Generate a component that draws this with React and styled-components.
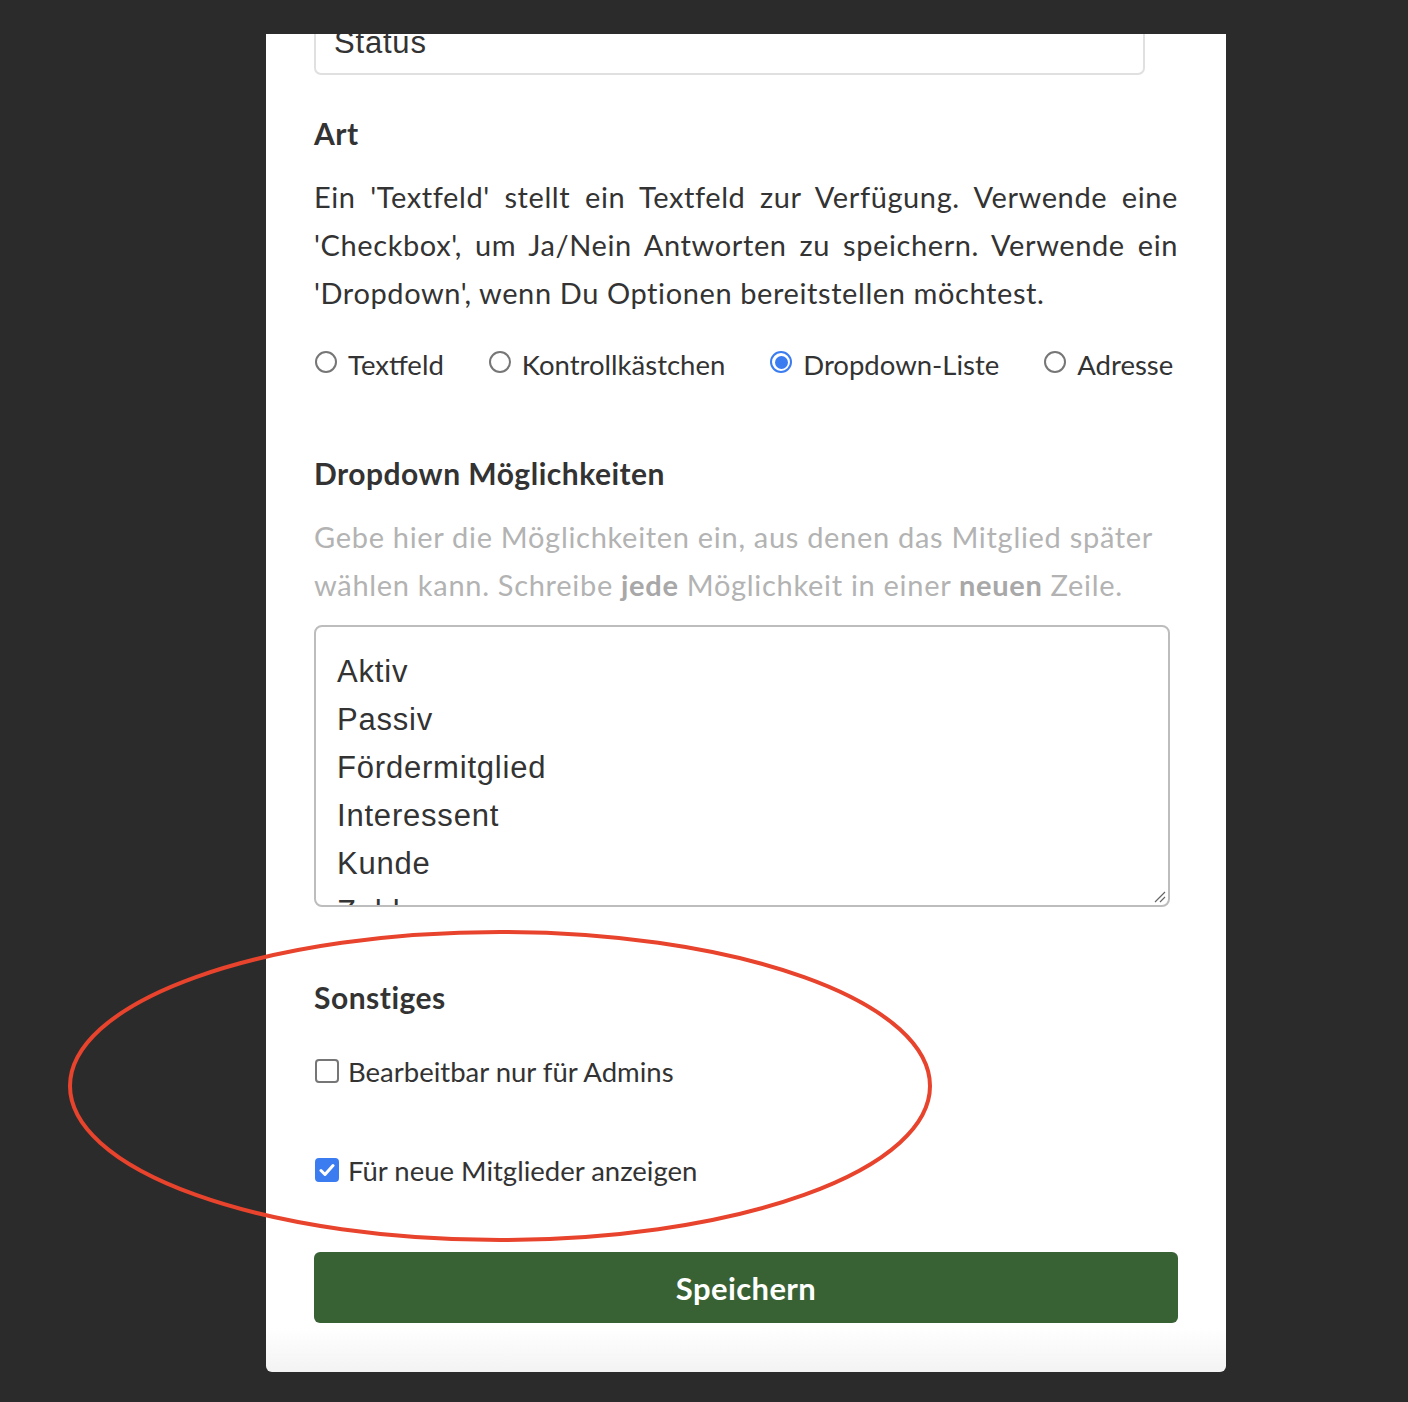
import React from 'react';
import styled, { createGlobalStyle } from 'styled-components';

const GlobalStyle = createGlobalStyle`
  html, body {
    margin: 0;
    padding: 0;
    background: #2b2b2b;
  }
  body {
    font-family: Lato, "Noto Sans", sans-serif;
    color: #333;
  }
`

//components
const Page = styled.div`
  position: relative;
  height: 1402px;
  padding: 34px 0 0 266px;
  box-sizing: border-box;
  overflow: hidden;
`
const Card = styled.div`
  width: 960px;
  height: 1338px;
  box-sizing: border-box;
  padding: 0 48px 49px;
  border-radius: 0 0 6px 6px;
  overflow: hidden;
  background: linear-gradient(to bottom, #fff calc(100% - 44px), #f3f3f3 100%);
  display: flex;
  flex-direction: column;
`
const TextInput = styled.div`
  margin-top: -23px;
  width: 831px;
  height: 64px;
  box-sizing: border-box;
  border: 2px solid #e0e0e0;
  border-radius: 7px;
  padding: 0 18px;
  display: flex;
  align-items: center;
  font-family: "Liberation Sans", Arial, sans-serif;
  font-size: 31px;
  letter-spacing: 0.8px;
  color: #333;
`
const Heading = styled.h3`
  margin: ${props => props.top}px 0 0;
  font-size: 30px;
  letter-spacing: 0.5px;
  line-height: 36px;
  font-weight: 700;
  color: #333;
`
const Paragraph = styled.p`
  margin: 22px 0 0;
  font-size: 29px;
  letter-spacing: 0.6px;
  line-height: 48px;
  text-align: justify;
  color: #333;
`
const Hint = styled.p`
  margin: 22px 0 0;
  font-size: 29px;
  letter-spacing: 0.7px;
  line-height: 48px;
  color: #b3b3b3;
  b {
    color: #a8a8a8;
    font-weight: 700;
  }
`
const RadioRow = styled.div`
  margin-top: 23px;
  display: flex;
  gap: 44px;
  height: 48px;
  align-items: center;
`
const Option = styled.label`
  display: flex;
  align-items: center;
  gap: ${props => props.gap || 11}px;
  font-size: 27.5px;
  color: #333;
  white-space: nowrap;
`
const RadioDot = styled.span`
  width: 22px;
  height: 22px;
  box-sizing: border-box;
  border-radius: 50%;
  border: 2px solid ${props => props.checked ? '#3b7cf0' : '#767676'};
  background: #fff;
  display: flex;
  align-items: center;
  justify-content: center;
  flex: none;
  margin: -4px 0 0 1px;
  &::after {
    content: '';
    display: ${props => props.checked ? 'block' : 'none'};
    width: 13px;
    height: 13px;
    border-radius: 50%;
    background: #3b7cf0;
  }
`
const TextArea = styled.div`
  margin-top: 16px;
  width: 856px;
  height: 282px;
  box-sizing: border-box;
  border: 2px solid #bdbdbd;
  border-radius: 8px;
  padding: 21px 21px 0;
  overflow: hidden;
  position: relative;
  font-family: "Liberation Sans", Arial, sans-serif;
  font-size: 31px;
  letter-spacing: 0.8px;
  line-height: 48px;
  color: #333;
`
const Grip = styled.svg`
  position: absolute;
  right: 2px;
  bottom: 2px;
`
const CheckRow = styled.div`
  margin-top: ${props => props.top}px;
  height: 48px;
  display: flex;
  align-items: center;
`
const Box = styled.span`
  width: 24px;
  height: 24px;
  box-sizing: border-box;
  border-radius: 4px;
  border: 2px solid ${props => props.checked ? '#3b7cf0' : '#767676'};
  background: ${props => props.checked ? '#3b7cf0' : '#fff'};
  display: flex;
  align-items: center;
  justify-content: center;
  flex: none;
  margin-left: 1px;
`
const SaveButton = styled.button`
  margin-top: 58px;
  width: 864px;
  height: 71px;
  border: none;
  border-radius: 6px;
  background: #386134;
  color: #fff;
  font-family: Lato, "Noto Sans", sans-serif;
  font-size: 31px;
  letter-spacing: 0.4px;
  font-weight: 700;
`
const Marker = styled.svg`
  position: absolute;
  left: 0;
  top: 0;
  pointer-events: none;
`

const Radio = ({ label, checked }) => (
  <Option>
    <RadioDot checked={checked} />
    {label}
  </Option>
)

const Check = ({ label, checked, top }) => (
  <CheckRow top={top}>
    <Option gap={9}>
      <Box checked={checked}>
        {checked && (
          <svg width="16" height="14" viewBox="0 0 16 14">
            <path d="M2 7.5 L6 11.5 L14 2.5" fill="none" stroke="#fff" strokeWidth="3" strokeLinecap="round" strokeLinejoin="round" />
          </svg>
        )}
      </Box>
      {label}
    </Option>
  </CheckRow>
)

const options = ['Aktiv', 'Passiv', 'Fördermitglied', 'Interessent', 'Kunde', 'Zahler'];

export default function App() {
  return (
    <>
      <GlobalStyle />
      <Page>
        <Card>
          <TextInput>Status</TextInput>
          <Heading top={40}>Art</Heading>
          <Paragraph>
            Ein 'Textfeld' stellt ein Textfeld zur Verfügung. Verwende eine 'Checkbox', um Ja/Nein Antworten zu speichern. Verwende ein 'Dropdown', wenn Du Optionen bereitstellen möchtest.
          </Paragraph>
          <RadioRow>
            <Radio label="Textfeld" />
            <Radio label="Kontrollkästchen" />
            <Radio label="Dropdown-Liste" checked />
            <Radio label="Adresse" />
          </RadioRow>
          <Heading top={67}>Dropdown Möglichkeiten</Heading>
          <Hint>
            Gebe hier die Möglichkeiten ein, aus denen das Mitglied später wählen kann. Schreibe <b>jede</b> Möglichkeit in einer <b>neuen</b> Zeile.
          </Hint>
          <TextArea>
            {options.map(o => <div key={o}>{o}</div>)}
            <Grip width="14" height="14" viewBox="0 0 14 14">
              <path d="M3 13 L13 3 M8 13 L13 8" stroke="#666" strokeWidth="1.2" />
            </Grip>
          </TextArea>
          <Heading top={72}>Sonstiges</Heading>
          <Check top={32} label="Bearbeitbar nur für Admins" />
          <Check top={51} label="Für neue Mitglieder anzeigen" checked />
          <SaveButton>Speichern</SaveButton>
        </Card>
        <Marker width="1408" height="1402">
          <ellipse cx="500" cy="1086" rx="430" ry="154" fill="none" stroke="#e8432c" strokeWidth="4" />
        </Marker>
      </Page>
    </>
  );
}
